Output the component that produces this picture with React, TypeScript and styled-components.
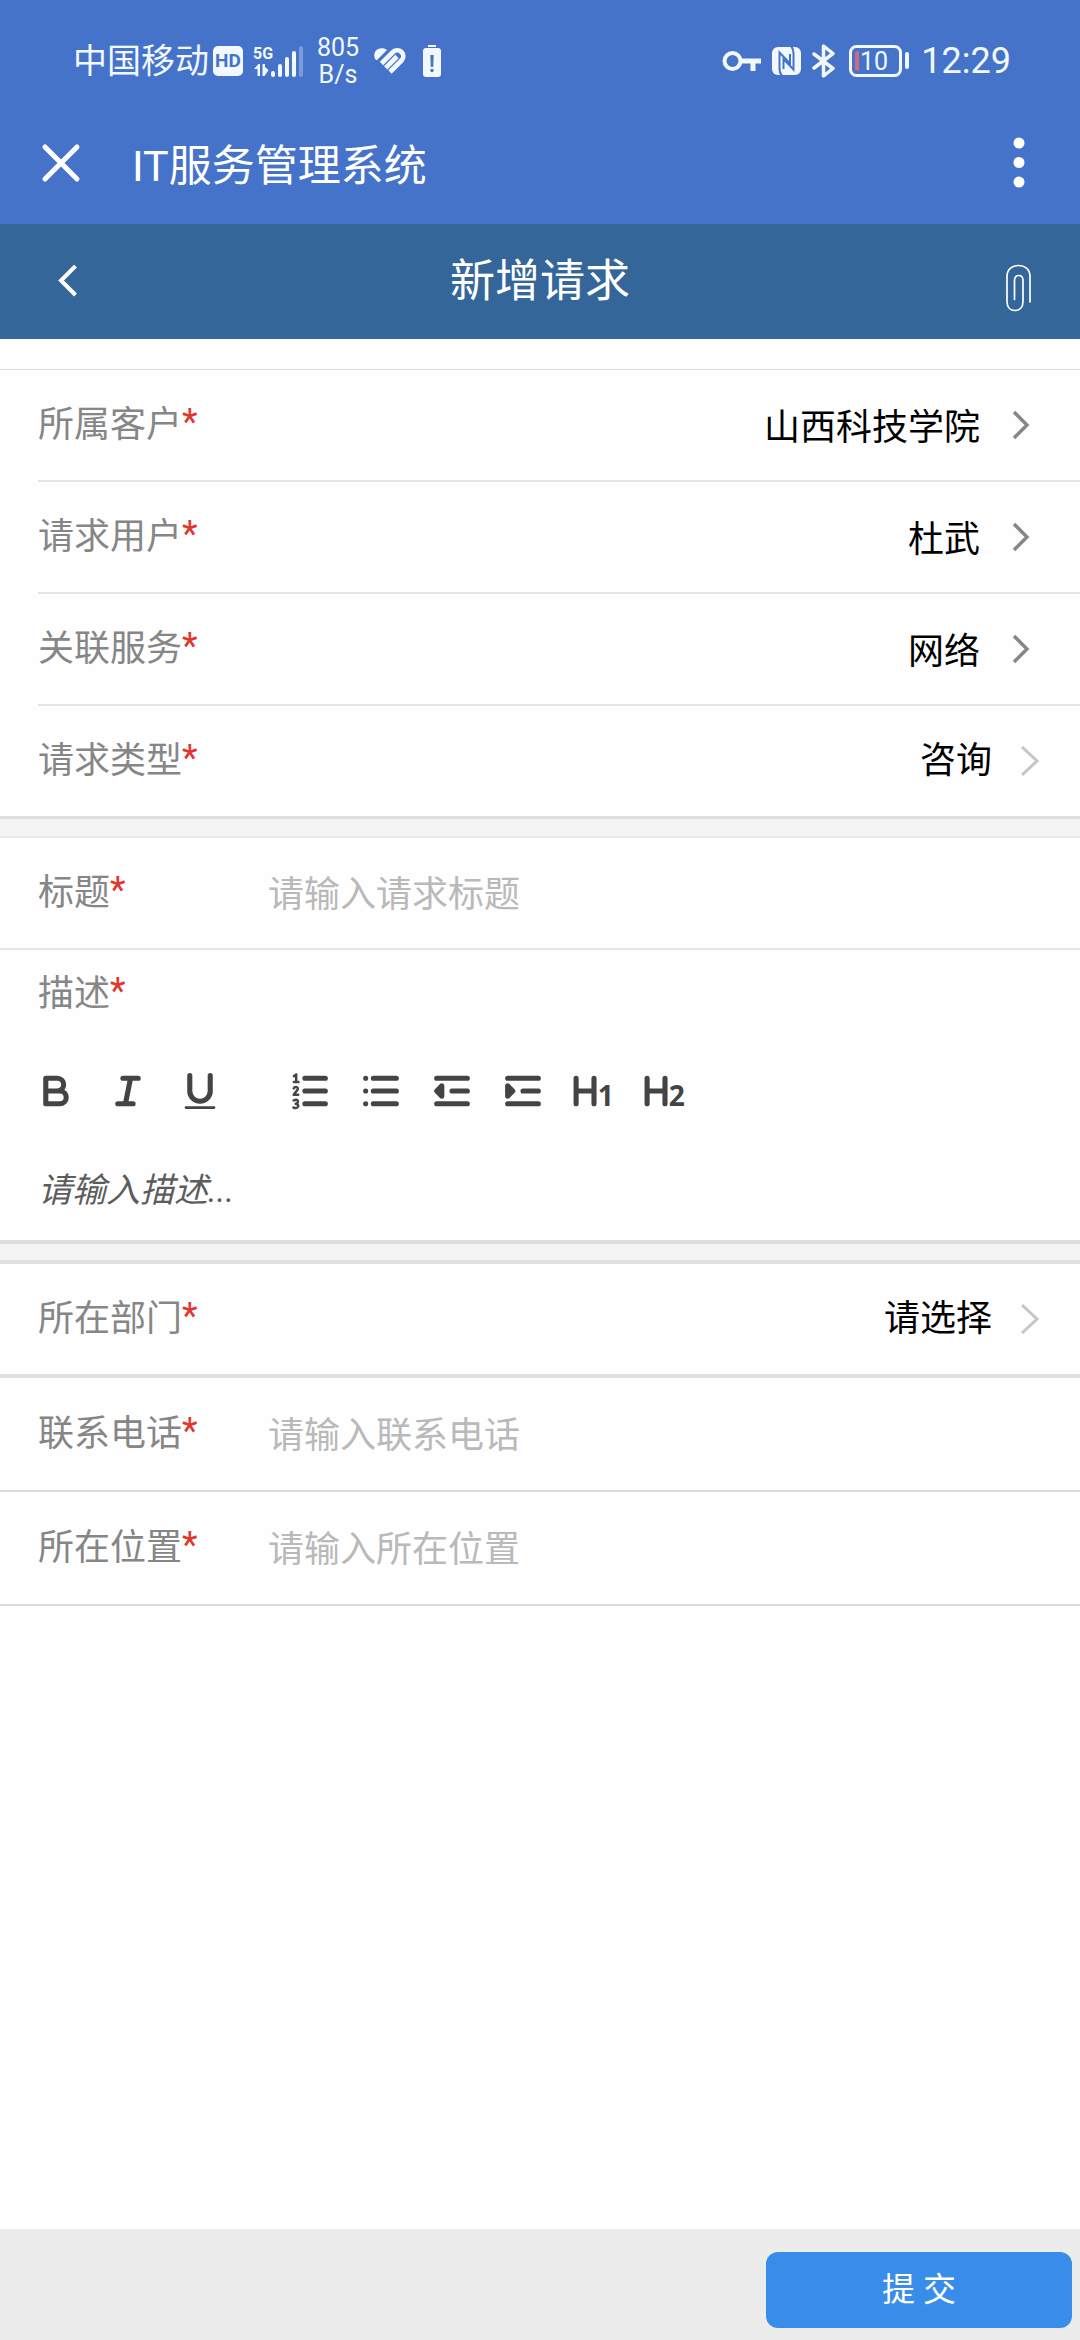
import React, { useState } from "react";
import styled, { createGlobalStyle, css } from "styled-components";

const GlobalStyle = createGlobalStyle`
  * { box-sizing: border-box; }
  body {
    margin: 0;
    background: #fefefe;
    font-family: Roboto, "Noto Sans CJK SC", sans-serif;
    font-size: 36px;
    line-height: 56px;
    color: #000;
  }
  button, input, select, textarea {
    font: inherit;
    color: inherit;
    margin: 0;
    padding: 0;
    border: 0;
    border-radius: 0;
    background: none;
    outline: none;
  }
  button { cursor: pointer; }
  svg { display: block; flex: none; }
`;

const Page = styled.div`
  display: flex;
  flex-direction: column;
  min-height: 100vh;
`;

const StatusBar = styled.div`
  display: flex;
  justify-content: space-between;
  align-items: center;
  height: 102px;
  padding: 20px 69px 0 73px;
  background: #4573c9;
  color: #f2f8ff;
`;

const StatusGroup = styled.div<{ $gap: number }>`
  display: flex;
  align-items: center;
  gap: ${(p) => p.$gap}px;
`;

const Carrier = styled.span`
  font-size: 34px;
`;

const HdBadge = styled.span`
  width: 30px;
  height: 30px;
  border-radius: 5px;
  background: #f2f8ff;
  color: #4573c9;
  font-size: 19px;
  font-weight: 700;
  line-height: 30px;
  text-align: center;
`;

const Speed = styled.span`
  width: 44px;
  font-size: 25px;
  line-height: 27px;
  text-align: center;
`;

const Clock = styled.span`
  font-size: 36px;
`;

const AppBar = styled.header`
  display: flex;
  align-items: center;
  height: 122px;
  padding: 0 36px;
  background: #4573c9;
  color: #fff;
`;

const IconButton = styled.button<{ $align?: "end" }>`
  display: flex;
  align-items: center;
  justify-content: ${(p) => p.$align ?? "center"};
  width: 50px;
  height: 60px;
`;

const AppTitle = styled.span`
  flex: 1;
  margin-left: 46px;
  padding-top: 6px;
  font-size: 43px;
`;

const NavBar = styled.nav`
  display: flex;
  align-items: center;
  justify-content: space-between;
  height: 115px;
  padding: 0 36px;
  background: #34669a;
  color: #fff;
`;

const NavTitle = styled.h1`
  margin: 0;
  font-size: 45px;
  font-weight: 400;
`;

const Form = styled.form`
  display: flex;
  flex: 1;
  flex-direction: column;
`;

const Section = styled.section<{ $first?: boolean }>`
  ${(p) =>
    p.$first &&
    css`
      margin-top: 30px;
      border-top: 1px solid #dcdcdc;
    `}
`;

const Band = styled.div<{ $edge: "soft" | "strong" }>`
  height: ${(p) => (p.$edge === "strong" ? 24 : 22)}px;
  border-top: ${(p) => (p.$edge === "strong" ? 4 : 3)}px solid #dedede;
  border-bottom: ${(p) => (p.$edge === "strong" ? "4px solid #e0e0e0" : "2px solid #e9e9e9")};
  background: #f4f4f4;
`;

const Row = styled.div<{ $line?: "inset" | "full" | "heavy"; $tall?: boolean }>`
  display: flex;
  align-items: center;
  padding: ${(p) => (p.$tall ? 28 : 27)}px 0;
  ${(p) =>
    p.$line === "inset"
      ? css`
          margin-left: 38px;
          border-bottom: 2px solid #e4e4e4;
        `
      : css`
          padding-left: 38px;
        `}
  ${(p) => p.$line === "full" && css`border-bottom: 2px solid ${p.$tall ? "#dadada" : "#e4e4e4"};`}
  ${(p) => p.$line === "heavy" && css`border-bottom: 4px solid #dfdfdf;`}
`;

const Label = styled.label`
  width: 230px;
  color: #868686;
  white-space: nowrap;
`;

const Star = styled.span`
  color: #e2352c;
  line-height: 36px;
  vertical-align: 3px;
`;

const Picker = styled.button`
  display: flex;
  flex: 1;
  align-items: center;
  justify-content: flex-end;
  gap: 32px;
  padding-right: 50px;
`;

const PickerValue = styled.span`
  padding-top: 6px;
  line-height: 50px;
`;

const SelectWrap = styled.div`
  display: flex;
  flex: 1;
  align-items: center;
  gap: 28px;
  padding-right: 40px;
`;

const Select = styled.select`
  flex: 1;
  min-width: 0;
  height: 56px;
  appearance: none;
  text-align-last: right;
`;

const TextInput = styled.input`
  flex: 1;
  min-width: 0;
  height: 56px;
  padding-top: 4px;
  &::placeholder {
    color: #b9b9b9;
    opacity: 1;
  }
`;

const Description = styled.div`
  display: flex;
  flex-direction: column;
  padding: 16px 38px 12px;
`;

const Toolbar = styled.div`
  display: flex;
  flex-wrap: wrap;
  gap: 64px;
  margin: 46px -5px 0;
`;

const ToolGroup = styled.div<{ $gap: number }>`
  display: flex;
  gap: ${(p) => p.$gap}px;
`;

const ToolButton = styled.button`
  width: 46px;
  height: 46px;
  color: #444;
`;

const Editor = styled.textarea`
  height: 90px;
  margin-top: 24px;
  padding: 24px 0 0;
  font-size: 34px;
  resize: none;
  &::placeholder {
    color: #5c5c5c;
    font-style: italic;
    opacity: 1;
  }
`;

const Footer = styled.footer`
  display: flex;
  justify-content: flex-end;
  margin-top: auto;
  padding: 23px 8px 12px;
  background: #ececec;
`;

const Submit = styled.button`
  width: 306px;
  height: 76px;
  border-radius: 12px;
  background: #398dea;
  color: #fff;
  font-size: 33px;
`;

const Chevron = ({ light }: { light?: boolean }) => (
  <svg width={light ? 20 : 18} height="30" viewBox={light ? "0 0 20 30" : "0 0 18 30"} fill="none" aria-hidden="true">
    <path
      d={light ? "M2 1 17 15 2 29" : "M2 2 15 15 2 28"}
      stroke={light ? "#c6c6c6" : "#868686"}
      strokeWidth={light ? 3 : 3.4}
    />
  </svg>
);

const SignalIcon = () => (
  <svg width="53" height="34" viewBox="0 0 53 34" fill="currentColor" aria-hidden="true">
    <text x="0" y="15" fontFamily="Roboto, sans-serif" fontSize="16" fontWeight="700">
      5G
    </text>
    <path d="M1 25 5.500 20H7V32H4.500V25zM9.500 20H12V23L15.500 26 11.500 32H9.500z" />
    <rect x="18" y="27" width="4" height="6" rx="2" />
    <rect x="25" y="20" width="4" height="13" rx="2" />
    <rect x="32" y="13" width="4" height="20" rx="2" />
    <rect x="39" y="7" width="4" height="26" rx="2" />
    <rect x="46" y="2" width="4" height="31" rx="2" opacity="0.3" />
  </svg>
);

const HealthIcon = () => (
  <svg width="42" height="34" viewBox="0 0 42 34" fill="none" stroke="currentColor" strokeWidth="4.700" aria-hidden="true">
    <path d="M6 16C2.500 12 4.500 5 10 4.500 13 4 15 4.500 17 6L7 16z" fill="currentColor" stroke="none" />
    <path d="M11.500 19.500 23 8a6 6 0 0 1 8.500 8.500L20 28" />
    <path d="M15.700 23.800 27 12.500" />
  </svg>
);

const LowBatteryIcon = () => (
  <svg width="20" height="34" viewBox="0 0 20 34" aria-hidden="true">
    <rect x="6" y="1" width="8" height="2" fill="currentColor" />
    <rect x="1" y="4" width="18" height="29" rx="3" fill="currentColor" />
    <path d="M8.300 11h3.400l-.5 12h-2.400z" fill="#4573c9" />
    <circle cx="10" cy="26.500" r="1.700" fill="#4573c9" />
  </svg>
);

const KeyIcon = () => (
  <svg width="39" height="22" viewBox="0 0 39 22" fill="none" stroke="currentColor" aria-hidden="true">
    <circle cx="10.500" cy="11" r="8" strokeWidth="4" />
    <path d="M19 11H39M31 11V21" strokeWidth="5" />
  </svg>
);

const NfcIcon = () => (
  <svg width="29" height="30" viewBox="0 0 29 30" aria-hidden="true">
    <rect x="0" y="1" width="29" height="28" rx="6" fill="currentColor" />
    <g fill="none" stroke="#4573c9" strokeWidth="2">
      <path d="M10 30Q7.500 27 7.500 23V6.500L18 17.500V8" />
      <path d="M19 0Q21.500 3 21.500 7V23.500L11.500 13V23" />
    </g>
  </svg>
);

const BluetoothIcon = () => (
  <svg width="26" height="34" viewBox="0 0 26 34" fill="none" stroke="currentColor" strokeWidth="3.500" strokeLinecap="round" strokeLinejoin="round" aria-hidden="true">
    <path d="M2 10 21 24.500 11.500 32V2L21 9.500 2 24" />
  </svg>
);

const BatteryIcon = () => (
  <svg width="61" height="34" viewBox="0 0 61 34" aria-hidden="true">
    <rect x="1.500" y="2.500" width="50" height="29" rx="6" fill="none" stroke="currentColor" strokeWidth="3" />
    <rect x="6" y="7" width="4" height="20" rx="2" fill="#d0697a" />
    <rect x="56" y="8" width="4" height="17" rx="2" fill="currentColor" />
    <text x="11" y="26" fontSize="25" fill="currentColor">
      10
    </text>
  </svg>
);

const CloseIcon = () => (
  <svg width="40" height="40" viewBox="0 0 40 40" fill="none" stroke="currentColor" strokeWidth="5" strokeLinecap="round" aria-hidden="true">
    <path d="M4 4 36 36M36 4 4 36" />
  </svg>
);

const MoreIcon = () => (
  <svg width="12" height="52" viewBox="0 0 12 52" fill="currentColor" aria-hidden="true">
    <circle cx="6" cy="6" r="5.500" />
    <circle cx="6" cy="25.500" r="5.500" />
    <circle cx="6" cy="45" r="5.500" />
  </svg>
);

const BackIcon = () => (
  <svg width="28" height="34" viewBox="0 0 28 34" fill="none" stroke="currentColor" strokeWidth="4" aria-hidden="true">
    <path d="M17.500 1 3 15.500 17.500 30" />
  </svg>
);

const ClipIcon = () => (
  <svg width="26" height="60" viewBox="0 0 26 60" fill="none" stroke="currentColor" strokeWidth="1.700" strokeLinecap="round" aria-hidden="true">
    <path d="M24 50V24.500C24 17 18.500 13.500 12.500 13.500S1 17 1 24.500V49.500C1 55.500 4.500 58.500 9 58.500S17 55.500 17 49.500V28.500C17 25 15 23.500 12.700 23.500S8.500 25 8.500 28.500V47.500" />
  </svg>
);

const ToolIcon = ({ children }: { children: React.ReactNode }) => (
  <svg width="46" height="46" viewBox="0 0 18 18" fill="none" stroke="currentColor" strokeWidth="2" strokeLinecap="round" strokeLinejoin="round" aria-hidden="true">
    {children}
  </svg>
);

const Heading = ({ level }: { level: string }) => (
  <>
    <path d="M2 4V14M9 4V14M2 9H9" />
    <text x="10.500" y="15" fontSize="11" fontWeight="700" fontFamily="Open Sans, sans-serif" fill="currentColor" stroke="none">
      {level}
    </text>
  </>
);

const textTools = [
  { name: "加粗", icon: <path d="M5 4H9.500a2.500 2.500 0 0 1 0 5H5zM5 9h5.500a2.500 2.500 0 0 1 0 5H5z" /> },
  { name: "斜体", icon: <path d="M7 4h6M5 14h6M8 14 10 4" /> },
  {
    name: "下划线",
    icon: (
      <>
        <path d="M5 3V9a4 4 0 0 0 8 0V3" />
        <rect x="3" y="15" width="12" height="1" rx="0.500" fill="currentColor" stroke="none" />
      </>
    ),
  },
];

const blockTools = [
  {
    name: "有序列表",
    icon: (
      <>
        <path d="M7 4h8M7 9h8M7 14h8" />
        <path
          strokeWidth="0.950"
          d="M2.700 3.200 3.600 2.500V5.500M2.700 5.500H4.500M2.600 8Q2.800 7.400 3.500 7.400 4.400 7.500 4.200 8.400L2.600 10.500H4.400M2.600 12.700Q4.300 12 4.300 13.200 4.200 13.900 3.400 14 4.500 14.100 4.400 15 4 16 2.500 15.500"
        />
      </>
    ),
  },
  { name: "无序列表", icon: <path d="M6 4h9M6 9h9M6 14h9M3 4v0M3 9v0M3 14v0" /> },
  {
    name: "减少缩进",
    icon: (
      <>
        <path d="M3 4h12M3 14h12M9 9h6" />
        <path d="M5 7V11L3 9z" fill="currentColor" />
      </>
    ),
  },
  {
    name: "增加缩进",
    icon: (
      <>
        <path d="M3 4h12M3 14h12M9 9h6" />
        <path d="M3 7V11L5 9z" fill="currentColor" />
      </>
    ),
  },
  { name: "一级标题", icon: <Heading level="1" /> },
  { name: "二级标题", icon: <Heading level="2" /> },
];

const pickers = [
  { id: "customer", label: "所属客户", value: "山西科技学院" },
  { id: "user", label: "请求用户", value: "杜武" },
  { id: "service", label: "关联服务", value: "网络" },
];

const contactFields = [
  { id: "phone", label: "联系电话", hint: "请输入联系电话" },
  { id: "place", label: "所在位置", hint: "请输入所在位置" },
];

const FieldLabel = ({ id, text }: { id: string; text: string }) => (
  <Label htmlFor={id}>
    {text}
    <Star>*</Star>
  </Label>
);

export default function App() {
  const [kind, setKind] = useState("咨询");
  const [department, setDepartment] = useState("请选择");

  return (
    <Page>
      <GlobalStyle />
      <StatusBar>
        <StatusGroup $gap={10}>
          <StatusGroup $gap={4}>
            <Carrier>中国移动</Carrier>
            <HdBadge>HD</HdBadge>
          </StatusGroup>
          <SignalIcon />
          <Speed>805 B/s</Speed>
          <HealthIcon />
          <LowBatteryIcon />
        </StatusGroup>
        <StatusGroup $gap={11}>
          <KeyIcon />
          <NfcIcon />
          <BluetoothIcon />
          <BatteryIcon />
          <Clock>12:29</Clock>
        </StatusGroup>
      </StatusBar>

      <AppBar>
        <IconButton type="button" aria-label="关闭">
          <CloseIcon />
        </IconButton>
        <AppTitle>IT服务管理系统</AppTitle>
        <IconButton type="button" aria-label="更多">
          <MoreIcon />
        </IconButton>
      </AppBar>

      <NavBar>
        <IconButton type="button" aria-label="返回" $align="end">
          <BackIcon />
        </IconButton>
        <NavTitle>新增请求</NavTitle>
        <IconButton type="button" aria-label="附件">
          <ClipIcon />
        </IconButton>
      </NavBar>

      <Form onSubmit={(e) => e.preventDefault()}>
        <Section $first>
          {pickers.map((p) => (
            <Row key={p.id} $line="inset">
              <FieldLabel id={p.id} text={p.label} />
              <Picker id={p.id} type="button">
                <PickerValue>{p.value}</PickerValue>
                <Chevron />
              </Picker>
            </Row>
          ))}
          <Row>
            <FieldLabel id="kind" text="请求类型" />
            <SelectWrap>
              <Select id="kind" value={kind} onChange={(e) => setKind(e.target.value)}>
                <option>咨询</option>
              </Select>
              <Chevron light />
            </SelectWrap>
          </Row>
        </Section>

        <Band $edge="soft" />

        <Section>
          <Row $line="full">
            <FieldLabel id="subject" text="标题" />
            <TextInput id="subject" placeholder="请输入请求标题" />
          </Row>
          <Description>
            <FieldLabel id="detail" text="描述" />
            <Toolbar>
              <ToolGroup $gap={26}>
                {textTools.map((t) => (
                  <ToolButton key={t.name} type="button" aria-label={t.name}>
                    <ToolIcon>{t.icon}</ToolIcon>
                  </ToolButton>
                ))}
              </ToolGroup>
              <ToolGroup $gap={25}>
                {blockTools.map((t) => (
                  <ToolButton key={t.name} type="button" aria-label={t.name}>
                    <ToolIcon>{t.icon}</ToolIcon>
                  </ToolButton>
                ))}
              </ToolGroup>
            </Toolbar>
            <Editor id="detail" placeholder="请输入描述..." />
          </Description>
        </Section>

        <Band $edge="strong" />

        <Section>
          <Row $line="heavy">
            <FieldLabel id="department" text="所在部门" />
            <SelectWrap>
              <Select id="department" value={department} onChange={(e) => setDepartment(e.target.value)}>
                <option>请选择</option>
              </Select>
              <Chevron light />
            </SelectWrap>
          </Row>
          {contactFields.map((f) => (
            <Row key={f.id} $line="full" $tall>
              <FieldLabel id={f.id} text={f.label} />
              <TextInput id={f.id} placeholder={f.hint} />
            </Row>
          ))}
        </Section>

        <Footer>
          <Submit type="submit">提 交</Submit>
        </Footer>
      </Form>
    </Page>
  );
}
